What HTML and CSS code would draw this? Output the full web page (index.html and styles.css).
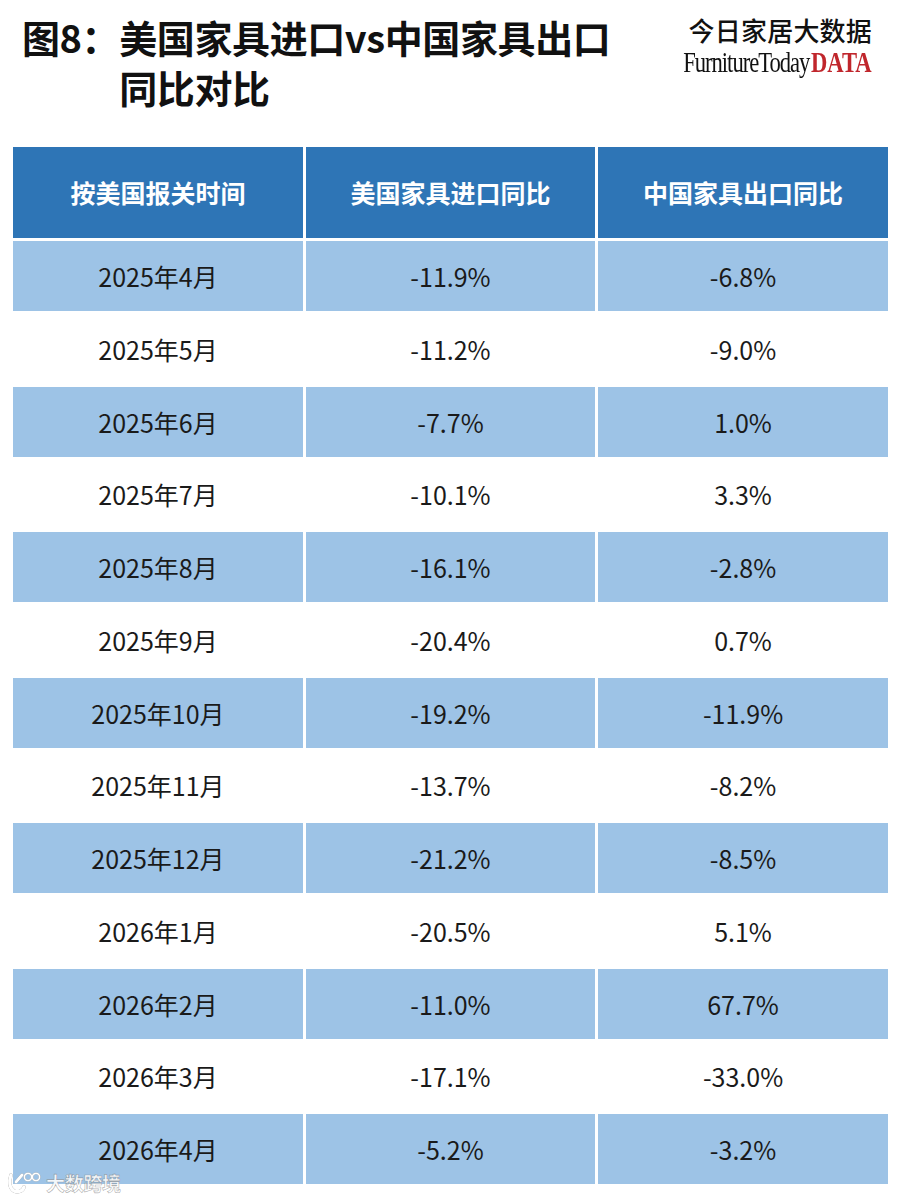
FILE: index.html
```html
<!DOCTYPE html>
<html lang="zh-CN">
<head>
<meta charset="utf-8">
<title>图8：美国家具进口vs中国家具出口同比对比</title>
<link rel="stylesheet" href="styles.css">
</head>
<body>
<div class="page">
  <header class="top">
    <h1 class="title"><span class="fig">图8：</span><span class="title-text">美国家具进口vs中国家具出口<br>同比对比</span></h1>
    <div class="brand">
      <div class="brand-cn">今日家居大数据</div>
      <div class="brand-en"><span class="ft">FurnitureToday</span><span class="data">DATA</span></div>
    </div>
  </header>

  <div class="grid">
    <div class="th">按美国报关时间</div><div class="th">美国家具进口同比</div><div class="th">中国家具出口同比</div>
    <div class="td alt">2025年4月</div><div class="td alt">-11.9%</div><div class="td alt">-6.8%</div>
    <div class="td">2025年5月</div><div class="td">-11.2%</div><div class="td">-9.0%</div>
    <div class="td alt">2025年6月</div><div class="td alt">-7.7%</div><div class="td alt">1.0%</div>
    <div class="td">2025年7月</div><div class="td">-10.1%</div><div class="td">3.3%</div>
    <div class="td alt">2025年8月</div><div class="td alt">-16.1%</div><div class="td alt">-2.8%</div>
    <div class="td">2025年9月</div><div class="td">-20.4%</div><div class="td">0.7%</div>
    <div class="td alt">2025年10月</div><div class="td alt">-19.2%</div><div class="td alt">-11.9%</div>
    <div class="td">2025年11月</div><div class="td">-13.7%</div><div class="td">-8.2%</div>
    <div class="td alt">2025年12月</div><div class="td alt">-21.2%</div><div class="td alt">-8.5%</div>
    <div class="td">2026年1月</div><div class="td">-20.5%</div><div class="td">5.1%</div>
    <div class="td alt">2026年2月</div><div class="td alt">-11.0%</div><div class="td alt">67.7%</div>
    <div class="td">2026年3月</div><div class="td">-17.1%</div><div class="td">-33.0%</div>
    <div class="td alt">2026年4月</div><div class="td alt">-5.2%</div><div class="td alt">-3.2%</div>
  </div>

  <div class="watermark">
    <svg class="wm-logo" width="36" height="26" viewBox="0 0 36 26">
      <path d="M5 5 C3 11 3 18 8 21 C12 23 17 21 18 17" fill="none" stroke="#fff" stroke-width="3.4" stroke-linecap="round"/>
      <path d="M10 12 L16 5" fill="none" stroke="#fff" stroke-width="3" stroke-linecap="round"/>
      <circle cx="22" cy="7" r="3.6" fill="none" stroke="#fff" stroke-width="1.8"/>
      <circle cx="30" cy="7" r="3.6" fill="none" stroke="#fff" stroke-width="1.8"/>
    </svg>
    <span class="wm-text">大数跨境</span>
  </div>
</div>
</body>
</html>
```

FILE: styles.css
```css
html, body {
  margin: 0;
  padding: 0;
  background: #ffffff;
}

.page {
  position: relative;
  width: 900px;
  height: 1200px;
  overflow: hidden;
  font-family: "Noto Sans CJK SC", "Noto Sans", sans-serif;
  color: #1a1a1a;
}

.top {
  display: flex;
  justify-content: space-between;
  align-items: flex-start;
  padding: 12px 28px 0 22px;
  height: 135px;
  box-sizing: border-box;
}

.title {
  display: flex;
  margin: 0;
  font-size: 38px;
  line-height: 50px;
  font-weight: 700;
  color: #111;
  letter-spacing: -0.4px;
}

.fig {
  white-space: nowrap;
}

.brand {
  display: flex;
  flex-direction: column;
  align-items: flex-end;
  padding-top: 2px;
}

.brand-cn {
  font-size: 26px;
  line-height: 32px;
  font-weight: 500;
  color: #111;
  letter-spacing: 0.2px;
}

.brand-en {
  font-family: "Liberation Serif", "Times New Roman", serif;
  font-size: 29px;
  line-height: 28px;
  white-space: nowrap;
  transform: scaleX(0.78);
  transform-origin: right center;
  margin-top: 2px;
}

.ft {
  color: #111;
  letter-spacing: -1.3px;
}

.data {
  color: #c0262c;
  font-weight: 700;
  margin-left: 2px;
}

.grid {
  display: grid;
  grid-template-columns: repeat(3, 1fr);
  grid-template-rows: 91.6px repeat(13, 70px);
  column-gap: 2.6px;
  row-gap: 2.75px;
  margin: 11.7px 12px 0 13px;
}

.th {
  background: #2e75b6;
  color: #ffffff;
  font-size: 25px;
  font-weight: 700;
  display: flex;
  align-items: center;
  justify-content: center;
}

.td {
  display: flex;
  align-items: center;
  justify-content: center;
  font-size: 25px;
  color: #1a1a1a;
  background: #ffffff;
}

.td.alt {
  background: #9dc3e6;
}

.watermark {
  position: absolute;
  left: 6px;
  bottom: 4px;
  display: flex;
  align-items: center;
  gap: 4px;
}

.wm-logo {
  filter: drop-shadow(0 0 0.6px rgba(90, 90, 90, 0.8));
}

.wm-text {
  font-size: 19px;
  line-height: 22px;
  font-weight: 700;
  color: rgba(255, 255, 255, 0.9);
  -webkit-text-stroke: 0.6px rgba(110, 110, 110, 0.55);
  letter-spacing: -0.3px;
}
```
